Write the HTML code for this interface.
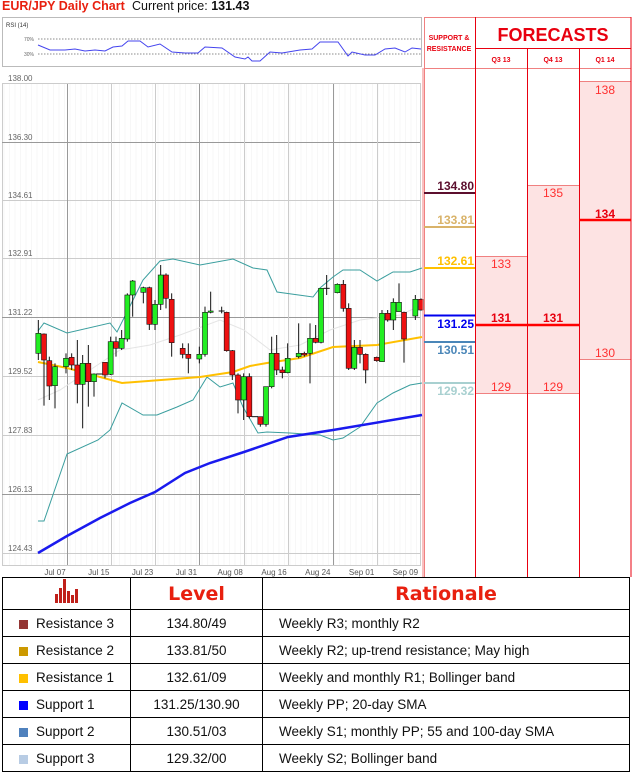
<!DOCTYPE html>
<html><head><meta charset="utf-8"><style>
body{margin:0;width:632px;height:773px;background:#fff;font-family:"Liberation Sans",sans-serif;position:relative;overflow:hidden}
.a{position:absolute}
table{border-collapse:collapse;position:absolute;left:2px;top:577px;width:628px}
td{border:1.5px solid #000;font-family:"Liberation Sans",sans-serif;font-size:13.5px;color:#111;height:26px;padding:0}
td.c{text-align:center}
.sw{display:inline-block;width:9px;height:9px;margin:0 8px 0 16px;vertical-align:-1px}
th{border:1.5px solid #000;color:#e8200f;font-family:"DejaVu Sans",sans-serif;font-size:19px;height:29px;font-weight:bold}
</style></head><body>
<div class="a" style="left:2px;top:-1px;font-size:12.5px;font-weight:bold;color:#e8200f">EUR/JPY Daily Chart</div>
<div class="a" style="left:132px;top:-1px;font-size:12.5px;color:#111">Current price: <b>131.43</b></div>
<svg class="a" style="left:0;top:0" width="632" height="773" id="s" font-family="Liberation Sans,sans-serif">
<rect x="2.5" y="17.5" width="419" height="49" fill="#fff" stroke="#bbb"/>
<text x="6" y="27" font-size="6" fill="#333">RSI (14)</text>
<text x="24" y="41" font-size="5" fill="#666">70%</text>
<text x="24" y="56" font-size="5" fill="#666">30%</text>
<line x1="38" y1="39" x2="421" y2="39" stroke="#666" stroke-dasharray="1.5,1.5" stroke-width=".7"/>
<line x1="38" y1="54" x2="421" y2="54" stroke="#666" stroke-dasharray="1.5,1.5" stroke-width=".7"/>
<polyline fill="none" stroke="#4444ee" stroke-width="1" points="38,45 50,50 65,50 75,49 85,51 95,50 105,51 113,47 122,46 128,41 140,41 148,47 160,44 172,52 185,53 198,53 205,47 222,48 235,57 245,59 248,57 252,61 260,61 270,52 282,53 300,50 312,49 320,42 338,42 348,56 352,52 365,55 375,55 385,49 395,48 405,52 412,48 421,49"/>
<g id="grid"></g>
<g id="ind"></g>
<g id="cd"></g>
<line x1="423" y1="68" x2="423" y2="577" stroke="#f08080" stroke-width="1"/>
<rect x="476" y="256" width="51" height="137" fill="#fde3e3"/>
<rect x="527" y="185" width="52" height="208" fill="#fde3e3"/>
<rect x="579" y="81" width="52" height="278" fill="#fde3e3"/>
<g stroke="#f08080" stroke-width="1">
<line x1="476" y1="256.5" x2="527" y2="256.5"/><line x1="476" y1="393.5" x2="579" y2="393.5"/>
<line x1="527" y1="185.5" x2="579" y2="185.5"/><line x1="579" y1="81.5" x2="631" y2="81.5"/>
<line x1="579" y1="359.5" x2="631" y2="359.5"/>
<line x1="424.5" y1="17" x2="424.5" y2="577"/>
<line x1="424" y1="68.5" x2="631" y2="68.5"/>
<line x1="424" y1="17.5" x2="631" y2="17.5"/>
</g>
<g stroke="#e8000f" stroke-width="1">
<line x1="475.5" y1="17" x2="475.5" y2="577"/>
<line x1="527.5" y1="49" x2="527.5" y2="577"/>
<line x1="579.5" y1="49" x2="579.5" y2="577"/>
<line x1="631" y1="17" x2="631" y2="577"/>
<line x1="476" y1="48.5" x2="631" y2="48.5"/>
</g>
<text x="449" y="40" font-size="7" font-weight="bold" fill="#e8000f" text-anchor="middle">SUPPORT &amp;</text>
<text x="449" y="51" font-size="7" font-weight="bold" fill="#e8000f" text-anchor="middle">RESISTANCE</text>
<text x="553" y="41" font-size="18" font-weight="bold" fill="#e8000f" text-anchor="middle">FORECASTS</text>
<g font-size="7" font-weight="bold" fill="#e8000f" text-anchor="middle"><text x="501" y="62">Q3 13</text><text x="553" y="62">Q4 13</text><text x="605" y="62">Q1 14</text></g>
<line x1="424" y1="193" x2="475" y2="193" stroke="#5c0f2e" stroke-width="2"/>
<line x1="424" y1="227" x2="475" y2="227" stroke="#d9b36a" stroke-width="2"/>
<line x1="424" y1="268" x2="475" y2="268" stroke="#ffc000" stroke-width="2"/>
<line x1="424" y1="315.5" x2="475" y2="315.5" stroke="#0000ee" stroke-width="2"/>
<line x1="424" y1="342" x2="475" y2="342" stroke="#4a86b8" stroke-width="2"/>
<line x1="424" y1="383" x2="475" y2="383" stroke="#a8d0d0" stroke-width="2"/>
<g font-size="12" font-weight="bold" text-anchor="end">
<text x="474" y="190" fill="#5c0f2e">134.80</text>
<text x="474" y="224" fill="#d9b36a">133.81</text>
<text x="474" y="265" fill="#ffc000">132.61</text>
<text x="474" y="328" fill="#0000ee">131.25</text>
<text x="474" y="354" fill="#4a86b8">130.51</text>
<text x="474" y="395" fill="#a8d0d0">129.32</text>
</g>
<line x1="476" y1="325" x2="579" y2="325" stroke="#ff0000" stroke-width="2.5"/>
<line x1="579" y1="220" x2="631" y2="220" stroke="#ff0000" stroke-width="2.5"/>
<g font-size="12" fill="#ff3030" text-anchor="middle">
<text x="501" y="268">133</text><text x="553" y="197">135</text><text x="605" y="94">138</text>
<text x="605" y="357">130</text><text x="501" y="391">129</text><text x="553" y="391">129</text>
<text x="501" y="322" font-weight="bold" fill="#e8000f">131</text><text x="553" y="322" font-weight="bold" fill="#e8000f">131</text>
<text x="605" y="218" font-weight="bold" fill="#e8000f">134</text>
</g>
</svg>
<table>
<tr><th style="width:125px"><svg width="26" height="24" viewBox="0 0 26 24"><g fill="#c0201a"><rect x="1" y="15" width="3" height="9"/><rect x="5" y="9" width="3" height="15"/><rect x="9" y="0" width="3" height="24"/><rect x="13" y="12" width="3" height="12"/><rect x="17" y="16" width="3" height="8"/><rect x="21" y="10" width="3" height="14"/></g></svg></th><th style="width:129px">Level</th><th>Rationale</th></tr>
<tr><td><span class="sw" style="background:#943634"></span>Resistance 3</td><td class="c">134.80/49</td><td style="padding-left:16px">Weekly R3; monthly R2</td></tr>
<tr><td><span class="sw" style="background:#cc9900"></span>Resistance 2</td><td class="c">133.81/50</td><td style="padding-left:16px">Weekly R2; up-trend resistance; May high</td></tr>
<tr><td><span class="sw" style="background:#ffc000"></span>Resistance 1</td><td class="c">132.61/09</td><td style="padding-left:16px">Weekly and monthly R1; Bollinger band</td></tr>
<tr><td><span class="sw" style="background:#0000ff"></span>Support 1</td><td class="c">131.25/130.90</td><td style="padding-left:16px">Weekly PP; 20-day SMA</td></tr>
<tr><td><span class="sw" style="background:#4f81bd"></span>Support 2</td><td class="c">130.51/03</td><td style="padding-left:16px">Weekly S1; monthly PP; 55 and 100-day SMA</td></tr>
<tr><td><span class="sw" style="background:#b8cce4"></span>Support 3</td><td class="c">129.32/00</td><td style="padding-left:16px">Weekly S2; Bollinger band</td></tr>
</table>
<script>
var NS="http://www.w3.org/2000/svg";
function el(p,t,a){var e=document.createElementNS(NS,t);for(var k in a)e.setAttribute(k,a[k]);p.appendChild(e);return e}
var g=document.getElementById('grid');
el(g,'rect',{x:2.5,y:83.5,width:418,height:482,fill:'#fff',stroke:'#ccc'});
for(var x=4;x<420;x+=5.5)el(g,'line',{x1:x,y1:84,x2:x,y2:565,stroke:'#f2f2f2','stroke-width':.6});
var hs=[83,142,200,258,317,376,435,494,553],lab=["138.00","136.30","134.61","132.91","131.22","129.52","127.83","126.13","124.43"];
hs.forEach(function(y,i){el(g,'line',{x1:2,y1:y+.5,x2:420,y2:y+.5,stroke:i%3==1?'#999':'#ccc'});var t=el(g,'text',{x:8,y:y-2,'font-size':8,fill:'#666'});t.textContent=lab[i]});
[67,111,155,199,244,288,333,377].forEach(function(x,i){el(g,'line',{x1:x+.5,y1:84,x2:x+.5,y2:565,stroke:(i%3==0)?'#999':'#ccc'})});
["Jul 07","Jul 15","Jul 23","Jul 31","Aug 08","Aug 16","Aug 24","Sep 01","Sep 09"].forEach(function(d,i){var t=el(g,'text',{x:55+i*43.8,y:575,'font-size':8,fill:'#555','text-anchor':'middle'});t.textContent=d});
var ind=document.getElementById('ind');
function pl(pts,c,w){el(ind,'polyline',{points:pts,fill:'none',stroke:c,'stroke-width':w})}
pl("38,400 60,390 90,370 120,350 150,345 180,335 220,320 244,330 270,350 300,345 330,330 360,320 400,315 422,305","#e4e4e4",1);
pl("38,331 44,323 67,333 110,323 117,332 143,280 160,261 173,259 200,265 233,259 253,268 267,270 277,292 313,297 320,288 333,277 343,270 360,270 377,281 393,272 410,272 422,268","#3a9e9e",1);
pl("38,521 44,521 67,454 98,440 110,430 122,403 143,415 157,415 177,407 193,400 207,377 220,387 233,383 243,407 258,433 267,432 290,433 320,435 333,440 343,438 360,427 377,403 393,393 410,385 422,383","#3a9e9e",1);
pl("38,362 67,368 122,383 200,377 233,372 250,366 267,363 300,358 333,347 377,345 422,337","#ffc000",2);
pl("38,553 67,536 100,518 130,503 155,492 185,473 210,463 244,452 288,437 333,430 422,415","#1a1aee",2.5);
var C=[[115,'g',280,340,240,360],[132,'r',282,360,280,497],[148,'r',362,438,350,480],[165,'g',380,437,370,505],[198,'g',355,380,340,400],[215,'r',352,375,340,390],[232,'r',375,433,300,490],[248,'g',370,433,345,565],[265,'r',370,425,315,500],[282,'g',402,425,400,470],[298,'d',402,403,402,403],[315,'r',367,405,367,415],[332,'g',305,403,290,405],[348,'r',305,325,290,350],[365,'g',295,325,270,330],[382,'g',165,297,160,305],[398,'g',123,165,120,230],[430,'g',143,157,140,190],[448,'r',143,253,140,270],[465,'g',193,253,180,270],[482,'g',105,193,75,210],[498,'r',105,175,100,205],[515,'r',178,308,160,350],[548,'r',325,343,310,355],[565,'r',343,355,310,400],[598,'g',343,357,320,370],[615,'g',217,343,200,350],[632,'g',213,217,155,220],[665,'d',213,214,200,220],[680,'r',217,332,215,335],[697,'r',332,405,330,420],[714,'r',405,480,400,520],[731,'g',410,480,400,540],[748,'r',410,530,400,535],[765,'d',530,531,530,531],[781,'r',530,553,530,560],[798,'g',440,553,440,560],[815,'g',340,440,290,445],[830,'r',340,390,285,405],[847,'r',390,398,380,415],[863,'g',355,398,310,400],[896,'g',340,350,250,355],[913,'r',340,345,335,350],[930,'g',295,340,250,430],[947,'r',295,307,255,310],[963,'g',145,307,145,310],[980,'d',145,146,105,165],[1012,'g',133,158,130,160],[1030,'r',133,205,120,215],[1046,'r',205,385,190,390],[1063,'g',322,385,300,390],[1080,'r',322,343,300,370],[1097,'r',343,390,340,430],[1130,'r',352,362,350,365],[1146,'g',220,365,210,365],[1163,'r',220,240,210,245],[1180,'g',187,240,175,270],[1197,'g',187,215,130,215],[1212,'r',217,297,215,368],[1246,'g',178,228,165,240],[1263,'r',178,210,175,212]];
var cd=document.getElementById('cd');
C.forEach(function(c){var x=c[0]/3,t=c[2]/3+240,b=c[3]/3+240,wt=c[4]/3+240,wb=c[5]/3+240;
el(cd,'line',{x1:x,y1:wt,x2:x,y2:wb,stroke:'#111','stroke-width':1});
if(c[1]=='d'){el(cd,'line',{x1:x-3,y1:t,x2:x+3,y2:t,stroke:'#111'});return}
el(cd,'rect',{x:x-2.5,y:t,width:5,height:Math.max(1,b-t),fill:c[1]=='g'?'#22ee22':'#ee1111',stroke:'#111','stroke-width':.6})});
</script>
</body></html>
